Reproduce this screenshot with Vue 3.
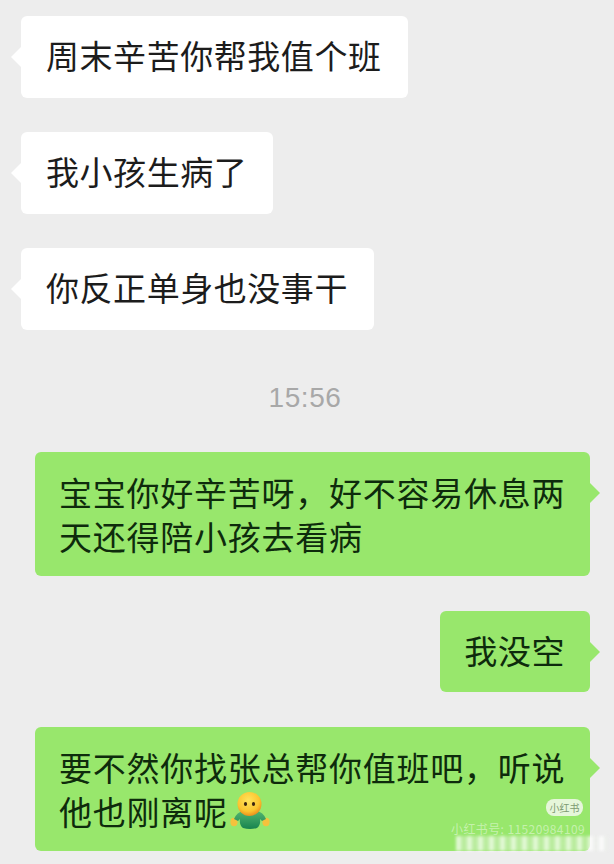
<script setup>
const incoming = ['周末辛苦你帮我值个班', '我小孩生病了', '你反正单身也没事干']
</script>

<template>
  <div class="chat">
    <div class="group-left">
      <div v-for="m in incoming" :key="m" class="bubble left">{{ m }}</div>
    </div>
    <div class="time">15:56</div>
    <div class="group-right">
      <div class="bubble right wide">宝宝你好辛苦呀，好不容易休息两天还得陪小孩去看病</div>
      <div class="bubble right short">我没空</div>
      <div class="bubble right wide">要不然你找张总帮你值班吧，听说他也刚离呢<svg class="emoji" viewBox="0 0 42 38" width="42" height="38" aria-hidden="true">
          <defs>
            <radialGradient id="face" cx="45%" cy="35%" r="65%">
              <stop offset="0" stop-color="#ffe45c" />
              <stop offset="0.7" stop-color="#fcc52f" />
              <stop offset="1" stop-color="#ec8f1c" />
            </radialGradient>
            <linearGradient id="shirt" x1="0" y1="0" x2="0" y2="1">
              <stop offset="0" stop-color="#52b56f" />
              <stop offset="1" stop-color="#17834f" />
            </linearGradient>
          </defs>
          <ellipse cx="5" cy="30" rx="3.6" ry="4.2" fill="#f5c23c" />
          <ellipse cx="37" cy="30" rx="3.6" ry="4.2" fill="#f5c23c" />
          <path d="M5 27 Q8 20 14 19 L28 19 Q34 20 37 27 L33 29 L31 27 Q32 33 28 36 Q21 38 14 36 Q10 33 11 27 L9 29 Z" fill="url(#shirt)" />
          <circle cx="20.5" cy="12" r="12" fill="url(#face)" />
          <ellipse cx="16.5" cy="12" rx="1.6" ry="2" fill="#3b2410" />
          <ellipse cx="24.5" cy="12" rx="1.6" ry="2" fill="#3b2410" />
        </svg></div>
    </div>
    <div class="badge">小红书</div>
    <div class="smear"></div>
    <div class="mark">小红书号: 11520984109</div>
  </div>
</template>

<style scoped>
.chat {
  position: relative;
  width: 614px;
  height: 864px;
  overflow: hidden;
  box-sizing: border-box;
  padding-top: 16px;
  background: #ededed;
  font-family: "Noto Sans CJK SC", "Liberation Sans", sans-serif;
  display: flex;
  flex-direction: column;
}
.group-left {
  display: flex;
  flex-direction: column;
  align-items: flex-start;
  gap: 34px;
  padding-left: 21px;
}
.group-right {
  display: flex;
  flex-direction: column;
  align-items: flex-end;
  gap: 35px;
  padding-right: 24px;
}
.bubble {
  position: relative;
  box-sizing: border-box;
  border-radius: 6px;
  font-size: 33px;
  letter-spacing: 0.55px;
  line-height: 44px;
  height: 82px;
  padding: 17px 26px 21px 25px;
  color: #1c1c1c;
}
.left {
  background: #fff;
}
.left::before {
  content: "";
  position: absolute;
  left: -10px;
  top: 31px;
  width: 20px;
  height: 20px;
  background: #fff;
  clip-path: polygon(0 50%, 50% 0, 100% 50%, 50% 100%);
}
.right {
  background: #98e76c;
  color: #0e2b0c;
}
.right::after {
  content: "";
  position: absolute;
  right: -10px;
  top: 31px;
  width: 20px;
  height: 20px;
  background: #98e76c;
  clip-path: polygon(0 50%, 50% 0, 100% 50%, 50% 100%);
}
.short {
  height: 81px;
  padding-left: 24px;
  padding-right: 25px;
}
.wide {
  width: 555px;
  height: 124px;
  padding: 18px 18px 18px 24px;
  letter-spacing: 0.75px;
}
.emoji {
  vertical-align: -5px;
  margin-left: 1px;
}
.time {
  height: 122px;
  box-sizing: border-box;
  padding-top: 14px;
  display: flex;
  align-items: center;
  justify-content: center;
  margin-left: -4px;
  font-family: "Liberation Sans", sans-serif;
  font-size: 28px;
  letter-spacing: 0.6px;
  color: #a8a8a8;
}
.badge {
  position: absolute;
  left: 546px;
  top: 799px;
  width: 37px;
  height: 17px;
  border-radius: 8px;
  background: #e6f6da;
  color: #7d9a72;
  font-size: 10px;
  line-height: 17px;
  text-align: center;
}
.mark {
  position: absolute;
  left: 451px;
  top: 821px;
  font-size: 12px;
  line-height: 16px;
  letter-spacing: 0.4px;
  white-space: nowrap;
  color: rgba(255, 255, 255, 0.45);
}
.smear {
  position: absolute;
  left: 456px;
  top: 836px;
  width: 152px;
  height: 15px;
  filter: blur(1.5px);
  background: repeating-linear-gradient(90deg, rgba(255,255,255,0.7) 0 5px, rgba(238,243,235,0.4) 5px 11px);
}
</style>
